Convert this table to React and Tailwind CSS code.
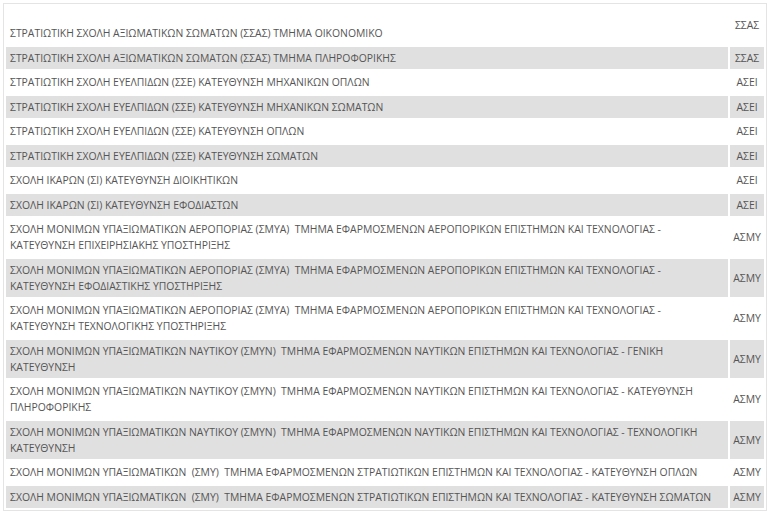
const rows = [
  { name: 'ΣΤΡΑΤΙΩΤΙΚΗ ΣΧΟΛΗ ΑΞΙΩΜΑΤΙΚΩΝ ΣΩΜΑΤΩΝ (ΣΣΑΣ) ΤΜΗΜΑ ΟΙΚΟΝΟΜΙΚΟ', type: 'ΣΣΑΣ', lead: true },
  { name: 'ΣΤΡΑΤΙΩΤΙΚΗ ΣΧΟΛΗ ΑΞΙΩΜΑΤΙΚΩΝ ΣΩΜΑΤΩΝ (ΣΣΑΣ) ΤΜΗΜΑ ΠΛΗΡΟΦΟΡΙΚΗΣ', type: 'ΣΣΑΣ' },
  { name: 'ΣΤΡΑΤΙΩΤΙΚΗ ΣΧΟΛΗ ΕΥΕΛΠΙΔΩΝ (ΣΣΕ) ΚΑΤΕΥΘΥΝΣΗ ΜΗΧΑΝΙΚΩΝ ΟΠΛΩΝ', type: 'ΑΣΕΙ' },
  { name: 'ΣΤΡΑΤΙΩΤΙΚΗ ΣΧΟΛΗ ΕΥΕΛΠΙΔΩΝ (ΣΣΕ) ΚΑΤΕΥΘΥΝΣΗ ΜΗΧΑΝΙΚΩΝ ΣΩΜΑΤΩΝ', type: 'ΑΣΕΙ' },
  { name: 'ΣΤΡΑΤΙΩΤΙΚΗ ΣΧΟΛΗ ΕΥΕΛΠΙΔΩΝ (ΣΣΕ) ΚΑΤΕΥΘΥΝΣΗ ΟΠΛΩΝ', type: 'ΑΣΕΙ' },
  { name: 'ΣΤΡΑΤΙΩΤΙΚΗ ΣΧΟΛΗ ΕΥΕΛΠΙΔΩΝ (ΣΣΕ) ΚΑΤΕΥΘΥΝΣΗ ΣΩΜΑΤΩΝ', type: 'ΑΣΕΙ' },
  { name: 'ΣΧΟΛΗ ΙΚΑΡΩΝ (ΣΙ) ΚΑΤΕΥΘΥΝΣΗ ΔΙΟΙΚΗΤΙΚΩΝ', type: 'ΑΣΕΙ' },
  { name: 'ΣΧΟΛΗ ΙΚΑΡΩΝ (ΣΙ) ΚΑΤΕΥΘΥΝΣΗ ΕΦΟΔΙΑΣΤΩΝ', type: 'ΑΣΕΙ' },
  { name: 'ΣΧΟΛΗ ΜΟΝΙΜΩΝ ΥΠΑΞΙΩΜΑΤΙΚΩΝ ΑΕΡΟΠΟΡΙΑΣ (ΣΜΥΑ)\u00a0 ΤΜΗΜΑ ΕΦΑΡΜΟΣΜΕΝΩΝ ΑΕΡΟΠΟΡΙΚΩΝ ΕΠΙΣΤΗΜΩΝ ΚΑΙ ΤΕΧΝΟΛΟΓΙΑΣ - ΚΑΤΕΥΘΥΝΣΗ ΕΠΙΧΕΙΡΗΣΙΑΚΗΣ ΥΠΟΣΤΗΡΙΞΗΣ', type: 'ΑΣΜΥ' },
  { name: 'ΣΧΟΛΗ ΜΟΝΙΜΩΝ ΥΠΑΞΙΩΜΑΤΙΚΩΝ ΑΕΡΟΠΟΡΙΑΣ (ΣΜΥΑ)\u00a0 ΤΜΗΜΑ ΕΦΑΡΜΟΣΜΕΝΩΝ ΑΕΡΟΠΟΡΙΚΩΝ ΕΠΙΣΤΗΜΩΝ ΚΑΙ ΤΕΧΝΟΛΟΓΙΑΣ - ΚΑΤΕΥΘΥΝΣΗ ΕΦΟΔΙΑΣΤΙΚΗΣ ΥΠΟΣΤΗΡΙΞΗΣ', type: 'ΑΣΜΥ' },
  { name: 'ΣΧΟΛΗ ΜΟΝΙΜΩΝ ΥΠΑΞΙΩΜΑΤΙΚΩΝ ΑΕΡΟΠΟΡΙΑΣ (ΣΜΥΑ)\u00a0 ΤΜΗΜΑ ΕΦΑΡΜΟΣΜΕΝΩΝ ΑΕΡΟΠΟΡΙΚΩΝ ΕΠΙΣΤΗΜΩΝ ΚΑΙ ΤΕΧΝΟΛΟΓΙΑΣ - ΚΑΤΕΥΘΥΝΣΗ ΤΕΧΝΟΛΟΓΙΚΗΣ ΥΠΟΣΤΗΡΙΞΗΣ', type: 'ΑΣΜΥ' },
  { name: 'ΣΧΟΛΗ ΜΟΝΙΜΩΝ ΥΠΑΞΙΩΜΑΤΙΚΩΝ ΝΑΥΤΙΚΟΥ (ΣΜΥΝ)\u00a0 ΤΜΗΜΑ ΕΦΑΡΜΟΣΜΕΝΩΝ ΝΑΥΤΙΚΩΝ ΕΠΙΣΤΗΜΩΝ ΚΑΙ ΤΕΧΝΟΛΟΓΙΑΣ - ΓΕΝΙΚΗ ΚΑΤΕΥΘΥΝΣΗ', type: 'ΑΣΜΥ' },
  { name: 'ΣΧΟΛΗ ΜΟΝΙΜΩΝ ΥΠΑΞΙΩΜΑΤΙΚΩΝ ΝΑΥΤΙΚΟΥ (ΣΜΥΝ)\u00a0 ΤΜΗΜΑ ΕΦΑΡΜΟΣΜΕΝΩΝ ΝΑΥΤΙΚΩΝ ΕΠΙΣΤΗΜΩΝ ΚΑΙ ΤΕΧΝΟΛΟΓΙΑΣ - ΚΑΤΕΥΘΥΝΣΗ ΠΛΗΡΟΦΟΡΙΚΗΣ', type: 'ΑΣΜΥ' },
  { name: 'ΣΧΟΛΗ ΜΟΝΙΜΩΝ ΥΠΑΞΙΩΜΑΤΙΚΩΝ ΝΑΥΤΙΚΟΥ (ΣΜΥΝ)\u00a0 ΤΜΗΜΑ ΕΦΑΡΜΟΣΜΕΝΩΝ ΝΑΥΤΙΚΩΝ ΕΠΙΣΤΗΜΩΝ ΚΑΙ ΤΕΧΝΟΛΟΓΙΑΣ - ΤΕΧΝΟΛΟΓΙΚΗ ΚΑΤΕΥΘΥΝΣΗ', type: 'ΑΣΜΥ' },
  { name: 'ΣΧΟΛΗ ΜΟΝΙΜΩΝ ΥΠΑΞΙΩΜΑΤΙΚΩΝ\u00a0 (ΣΜΥ)\u00a0 ΤΜΗΜΑ ΕΦΑΡΜΟΣΜΕΝΩΝ ΣΤΡΑΤΙΩΤΙΚΩΝ ΕΠΙΣΤΗΜΩΝ ΚΑΙ ΤΕΧΝΟΛΟΓΙΑΣ - ΚΑΤΕΥΘΥΝΣΗ ΟΠΛΩΝ', type: 'ΑΣΜΥ' },
  { name: 'ΣΧΟΛΗ ΜΟΝΙΜΩΝ ΥΠΑΞΙΩΜΑΤΙΚΩΝ\u00a0 (ΣΜΥ)\u00a0 ΤΜΗΜΑ ΕΦΑΡΜΟΣΜΕΝΩΝ ΣΤΡΑΤΙΩΤΙΚΩΝ ΕΠΙΣΤΗΜΩΝ ΚΑΙ ΤΕΧΝΟΛΟΓΙΑΣ - ΚΑΤΕΥΘΥΝΣΗ ΣΩΜΑΤΩΝ', type: 'ΑΣΜΥ' },
];

const App = () => {
  return (
    <div className="bg-white min-h-[518px] pt-[3px] pl-[3px] font-['Open_Sans',sans-serif]">
      <div className="w-[764px] border border-[#e4e4e4]">
        <table className="w-full border-separate border-spacing-[2px] text-[10.4px] leading-[16px] text-[#555]">
          <tbody>
            {rows.map((row, i) => (
              <tr key={i} className={i % 2 === 1 ? 'bg-[#e0e0e0]' : 'bg-white'}>
                <td className="px-[4px] py-[3.25px] align-middle">
                  {row.lead && <br />}
                  {row.name}
                </td>
                <td className="w-[34px] px-[2px] py-[3.25px] text-center align-middle">
                  {row.type}
                </td>
              </tr>
            ))}
          </tbody>
        </table>
      </div>
    </div>
  );
};

export default App;
